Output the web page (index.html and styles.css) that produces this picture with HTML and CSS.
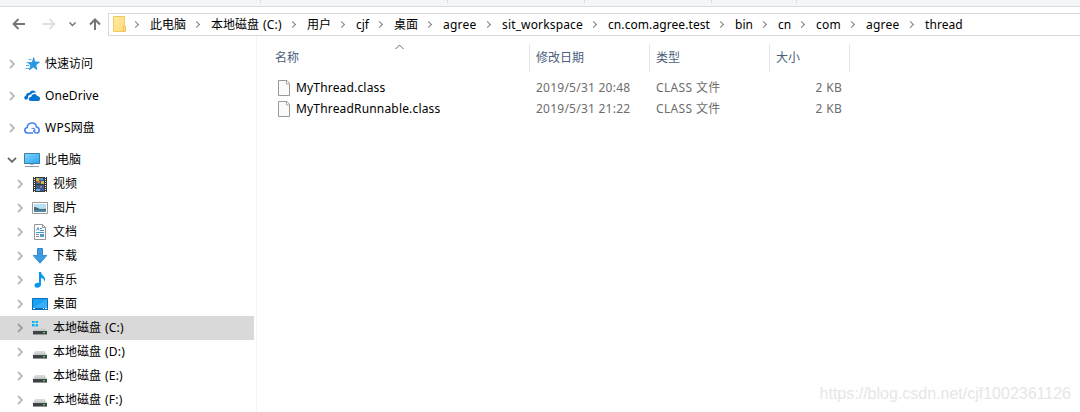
FILE: index.html
```html
<!DOCTYPE html>
<html lang="zh-CN">
<head>
<meta charset="utf-8">
<title>thread</title>
<link rel="stylesheet" href="styles.css">
</head>
<body>
<svg class="defs" width="0" height="0">
  <defs>
    <linearGradient id="screen" x1="0" y1="0" x2="1" y2="1"><stop offset="0" stop-color="#8bd6fb"/><stop offset=".5" stop-color="#54bdf8"/><stop offset="1" stop-color="#2ba6f1"/></linearGradient>
    <linearGradient id="folder" x1="0" y1="0" x2="1" y2="1"><stop offset="0" stop-color="#ffeaa0"/><stop offset="1" stop-color="#ffdc7c"/></linearGradient>
    <linearGradient id="lid" x1="0" y1="0" x2="0" y2="1"><stop offset="0" stop-color="#dcdfe2"/><stop offset="1" stop-color="#bfc3c6"/></linearGradient>
    <symbol id="chev" viewBox="0 0 6 10"><path d="M1 1l4 4-4 4" fill="none" stroke="currentColor" stroke-width="1.9"/></symbol>
    <symbol id="drive" viewBox="0 0 16 16"><path d="M3.5 7h9l2.300 4H1z" fill="url(#lid)"/><path d="M1 11h14v3H1z" fill="#3f4345"/><path d="M1 14h14v1H1z" fill="#929597"/><path d="M11 12h2v1.300h-2z" fill="#35e650"/></symbol>
    <symbol id="page" viewBox="0 0 13 16"><path d="M.5.5h8.500l2.500 3v12H.5z" fill="#fafafa" stroke="#999"/><path d="M8.500.8v3.200h3" fill="#fff" stroke="#aaa"/></symbol>
  </defs>
</svg>
<div class="ribbon"><i class="t1"></i><i class="t2"></i><i class="t3"></i><i class="t4"></i><i class="t5"></i></div>
<header class="navbar">
  <div class="nav-buttons">
    <svg width="108" height="23" fill="none" stroke="#757575" stroke-width="1.8">
      <path d="M25 11H14M18.500 6l-5 5 5 5"/>
      <path stroke="#dedede" d="M43 11h11M49.500 6l5 5-5 5"/>
      <path d="M69.500 9.500l3 3 3-3" stroke-width="1.5"/>
      <path d="M95 17V6.500M90 11.500l5-5 5 5" stroke-width="2"/>
    </svg>
  </div>
  <nav class="address">
    <svg class="folder" width="14" height="17" viewBox="0 0 14 17"><path d="M.5.5h11v15H.5z" fill="url(#folder)" stroke="#f0cb5c"/><path d="M10.500 15.500v-5.500h2v5.500z" fill="#ffe391" stroke="#edc657"/></svg>
    <span class="crumb w36">此电脑</span>
    <span class="crumb w71">本地磁盘 <span class="drive-letter">(C:)</span></span>
    <span class="crumb w24">用户</span>
    <span class="crumb w13">cjf</span>
    <span class="crumb w24">桌面</span>
    <span class="crumb latin w34">agree</span>
    <span class="crumb spaced w81">sit_workspace</span>
    <span class="crumb tight w102">cn.com.agree.test</span>
    <span class="crumb w18">bin</span>
    <span class="crumb w13">cn</span>
    <span class="crumb latin w25">com</span>
    <span class="crumb latin w34">agree</span>
    <span class="crumb tight w38">thread</span>
  </nav>
</header>
<div class="body">
  <aside class="tree">
    <div class="root"><svg class="chev"><use href="#chev"/></svg>
      <svg class="icon" viewBox="0 0 16 16"><path d="M9.700 1.500l1.200 4.500h4.600l-3.600 3 1 4.700-3.600-2.600-4 2.800 1.500-4.700-3-2.700h4.400z" fill="#249bea" stroke="#1785d0" stroke-width=".6"/><path d="M4.500 3.500h3M2.500 6.500H5M2 9.500h3M1.500 12.500H5" stroke="#55b4ee"/></svg>快速访问</div>
    <div class="root"><svg class="chev"><use href="#chev"/></svg>
      <svg class="icon" viewBox="0 0 16 16"><path d="M2.500 11.800C-.3 11.800-.5 8.400 2 7.500 2 5.300 4.300 4.200 5.500 4.800 7 1.700 10.800 2 12.200 4.800 10 4.200 8 5 7.200 6.500 5 6.300 3.500 8.500 4.200 10.200z" fill="#0872cf"/><path d="M7 13c-2.700 0-3.300-3.800.3-4.300C7.600 5.500 12.200 5 13 8c3.800-.2 4 5 .8 5z" fill="#0872cf"/></svg><span class="tight">OneDrive</span></div>
    <div class="root"><svg class="chev"><use href="#chev"/></svg>
      <svg class="icon" viewBox="0 0 16 16" fill="none" stroke="#4682f3" stroke-width="1.600"><path d="M9 13H4C.2 13-.3 8.300 3.200 7.500 3.500 1.700 11.800 1.300 12.500 7c3.500.8 3.500 5.500.2 6-2.200.2-2.500-1.500-3.200-2.800"/><path d="M7.500 8.500c2.300-.8 3.700.5 3.300 2.500" stroke-width="1.200"/></svg><span class="latin">WPS</span>网盘</div>
    <div class="root open"><svg class="down" viewBox="0 0 10 6"><path d="M1 .8l4 4 4-4" fill="none" stroke="#6a6a6a" stroke-width="1.9"/></svg>
      <svg class="icon" viewBox="0 0 16 16"><path d="M.5 1.500h15v10H.5z" fill="url(#screen)" stroke="#397fa7"/><path d="M6 12h4v1H6z" fill="#b3bcc4"/><path d="M1 14.500h14" stroke="#8b9eae"/></svg>此电脑</div>
    <div class="leaf"><svg class="chev"><use href="#chev"/></svg>
      <svg class="icon" viewBox="0 0 16 16"><path d="M1 1h14v15H1z" fill="#383838"/><path d="M2.500 1v15M13.500 1v15" stroke="#ececec" stroke-dasharray="1 1"/><path d="M4 2h8v6H4zM4 9h8v6H4z" fill="#315f9c"/><path d="M4 2h3v3H4zM9 5h3v3H9z" fill="#d3b73d"/><path d="M7 2h4v2H7z" fill="#568fca"/><path d="M5 5h3v2H5zM8 10h2v2H8z" fill="#d66a35"/><path d="M4 13h4v2H4z" fill="#75afd9"/></svg>视频</div>
    <div class="leaf"><svg class="chev"><use href="#chev"/></svg>
      <svg class="icon" viewBox="0 0 16 16"><path d="M.5 2.500h15v11H.5z" fill="#fff" stroke="#999"/><path d="M2 4h12v8H2z" fill="#b7e0f7"/><path d="M2 7c3-.3 4 2 7 2l5-.2V10H2z" fill="#426d70"/><path d="M2 10h12v2H2z" fill="#5385a8"/></svg>图片</div>
    <div class="leaf"><svg class="chev"><use href="#chev"/></svg>
      <svg class="icon" viewBox="0 0 16 16"><path d="M2.500.5h8l3 3v12h-11z" fill="#fff" stroke="#959595"/><path d="M10.500.5v3h3" fill="none" stroke="#959595"/><path d="M4.500 6.500l1.500-3 1 3M8 4.500h2M8 6.500h4M4 8.500h8" fill="none" stroke="#3a95d2"/><path d="M4 10.500h3M4 12.500h3" stroke="#888"/><path d="M8 10h4v3H8z" fill="#5599ca"/></svg>文档</div>
    <div class="leaf"><svg class="chev"><use href="#chev"/></svg>
      <svg class="icon" viewBox="0 0 16 16"><path d="M5.500.5h5v7h4.200L8 15.200 1.300 7.500h4.200z" fill="#3e9be2" stroke="#2f8cd2"/></svg>下载</div>
    <div class="leaf"><svg class="chev"><use href="#chev"/></svg>
      <svg class="icon" viewBox="0 0 16 16"><path d="M7 0h2c.3 4 6 4.500 3.400 10C12.700 7.500 11 6.300 9 6v6.500c0 3.700-6.500 4.500-6.500 1C2.500 11.300 5 10.200 7 11z" fill="#0997ec"/></svg>音乐</div>
    <div class="leaf"><svg class="chev"><use href="#chev"/></svg>
      <svg class="icon" viewBox="0 0 16 16"><path d="M.5 2.500h15v11H.5z" fill="#1ba1f4" stroke="#0871b9"/><path d="M1 12L15 3v9z" fill="#36aff8"/><path d="M0 12h16v2H0z" fill="#0871b9"/><path d="M1 12.500h2M11 12.500h1M13 12.500h2" stroke="#e4f6ff"/></svg>桌面</div>
    <div class="leaf selected"><svg class="chev"><use href="#chev"/></svg>
      <svg class="icon" viewBox="0 0 16 16"><use href="#drive" width="16" height="16"/><path d="M0 1h2.500v2H0zM3.500 1H6v2H3.500zM0 4h2.500v2.500H0zM3.500 4H6v2.500H3.500z" fill="#08b2ee"/></svg>本地磁盘 <span class="drive-letter">(C:)</span></div>
    <div class="leaf"><svg class="chev"><use href="#chev"/></svg><svg class="icon"><use href="#drive" width="16" height="16"/></svg>本地磁盘 <span class="drive-letter">(D:)</span></div>
    <div class="leaf"><svg class="chev"><use href="#chev"/></svg><svg class="icon"><use href="#drive" width="16" height="16"/></svg>本地磁盘 <span class="drive-letter">(E:)</span></div>
    <div class="leaf"><svg class="chev"><use href="#chev"/></svg><svg class="icon"><use href="#drive" width="16" height="16"/></svg>本地磁盘 <span class="drive-letter">(F:)</span></div>
  </aside>
  <main class="files">
    <div class="columns">
      <div>名称<svg class="sort" width="9" height="6"><path d="M.5 5l4-4 4 4" fill="none" stroke="#666"/></svg></div><div>修改日期</div><div>类型</div><div>大小</div>
    </div>
    <div class="file"><div class="name"><svg width="13" height="16"><use href="#page"/></svg>MyThread.class</div><div class="date">2019/5/31 20:48</div><div class="kind">CLASS 文件</div><div class="size">2 KB</div></div>
    <div class="file"><div class="name"><svg width="13" height="16"><use href="#page"/></svg>MyThreadRunnable.class</div><div class="date">2019/5/31 21:22</div><div class="kind">CLASS 文件</div><div class="size">2 KB</div></div>
  </main>
</div>
<div class="watermark">https://blog.csdn.net/cjf1002361126</div>
</body>
</html>
```
FILE: styles.css
```css
* { box-sizing: border-box; }
body { margin: 0; width: 1080px; height: 412px; overflow: hidden; position: relative; background: #fff; color: #000; font: 12px/24px "Noto Sans", "Noto Sans CJK SC", sans-serif; white-space: nowrap; }
svg { display: block; flex: none; }
.defs { position: absolute; }
.ribbon { height: 7px; background: #f5f6f7; border-bottom: 1px solid #dadbdc; display: flex; }
.ribbon i { height: 3px; border-right: 1px solid #dfe0e1; }
.t1 { width: 261px; } .t2 { width: 187px; } .t3 { width: 137px; } .t4 { width: 127px; } .t5 { width: 85px; }
.navbar { display: flex; margin-top: 6px; height: 23px; }
.nav-buttons { width: 108px; }
.address { flex: 1; border: 1px solid #d9d9d9; border-right: 0; display: flex; align-items: center; padding-left: 4px; }
.folder { margin-right: 3px; }
.crumb { display: flex; flex: none; box-sizing: content-box; padding-left: 25px; position: relative; line-height: 21px; gap: 4px; }
.folder + .crumb { padding-left: 20px; }
.crumb::before { content: ""; position: absolute; left: 9px; top: 9px; width: 4px; height: 4px; box-sizing: content-box; border: solid #808080; border-width: 1.5px 1.5px 0 0; transform: translate(-1px, -1px) rotate(45deg); }
.folder + .crumb::before { left: 4px; }
.w13 { width: 13px; } .w18 { width: 18px; } .w24 { width: 24px; } .w25 { width: 25px; } .w34 { width: 34px; } .w36 { width: 36px; } .w38 { width: 38px; } .w71 { width: 71px; } .w81 { width: 81px; } .w102 { width: 102px; }
.latin { letter-spacing: .25px; }
.spaced { letter-spacing: .15px; }
.tight { letter-spacing: .08px; }
.body { display: flex; height: 376px; }
.tree { width: 257px; border-right: 1px solid #f4f4f4; padding-top: 16px; }
.root, .leaf { display: flex; align-items: center; height: 24px; width: 254px; }
.root { padding-left: 9px; margin-bottom: 8px; }
.root.open { padding-left: 7px; margin-bottom: 0; }
.leaf { padding-left: 17px; }
.chev { width: 6px; height: 10px; color: #b9b9b9; margin-right: 9px; }
.down { width: 10px; height: 6px; margin-right: 7px; }
.icon { width: 16px; height: 16px; margin-right: 5px; }
.selected { background: #d9d9d9; }
.selected .chev { color: #9f9f9f; }
.drive-letter { margin-left: 4px; letter-spacing: .2px; }
.crumb .drive-letter { margin-left: 0; }
.files { flex: 1; padding: 8px 0 0 13px; }
.columns, .file { display: grid; grid-template-columns: 260px 120px 120px 80px; }
.columns { height: 27px; color: #4c607a; margin-bottom: 6px; }
.columns > div { border-right: 1px solid #e5e5e5; padding-left: 6px; line-height: 28px; position: relative; }
.columns > div:first-child { padding-left: 5px; }
.sort { position: absolute; left: 125px; top: 0; }
.file { height: 21px; line-height: 21px; color: #6d6d6d; }
.file > div { padding-left: 6px; }
.file .name { display: flex; align-items: center; gap: 5px; padding-left: 8px; color: #000; letter-spacing: .17px; }
.date { letter-spacing: .24px; }
.kind { letter-spacing: .35px; }
.file .size { text-align: right; padding-right: 8px; letter-spacing: .3px; }
.watermark { position: absolute; right: 9px; bottom: 6px; font: 16px/24px "Liberation Sans", Arial, sans-serif; color: #e6e6e6; }
```
